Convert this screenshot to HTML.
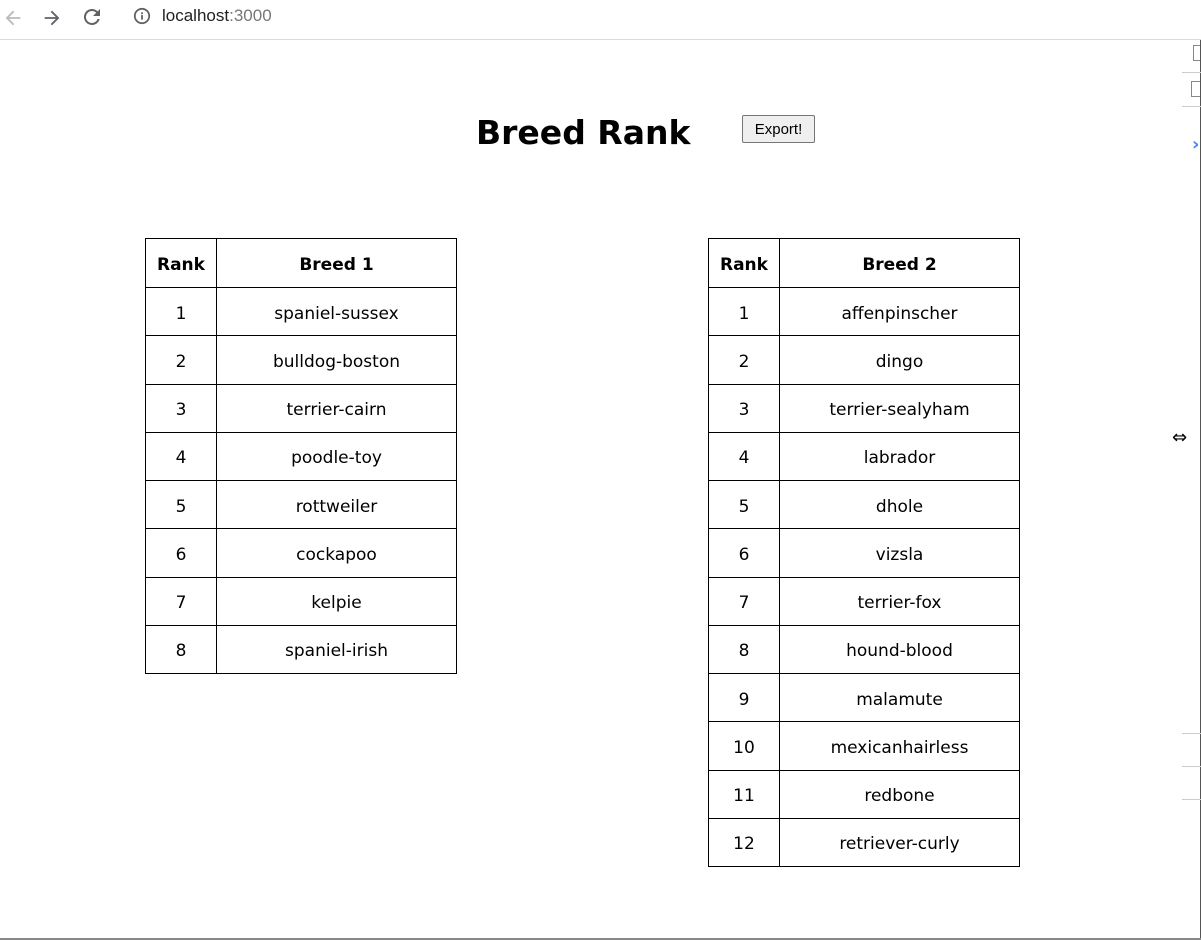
<!DOCTYPE html>
<html><head><meta charset="utf-8"><style>
body{margin:0;width:1201px;height:940px;background:#fff;font-family:"DejaVu Sans","Liberation Sans",sans-serif;position:relative;overflow:hidden}
.bar{position:absolute;left:0;top:0;width:1201px;height:39px;border-bottom:1px solid #dadce0;background:#fff}
.bar span{position:absolute;top:6px;font-size:17px;font-family:"Liberation Sans",sans-serif}
h1{position:absolute;left:476px;top:113px;margin:0;font-size:33px;font-weight:bold;letter-spacing:0px}
button{position:absolute;left:742px;top:115px;width:73px;height:28px;font-family:"Liberation Sans",sans-serif;font-size:15px;background:#efefef;border:1px solid #767676;border-radius:2px;padding:0}
table{position:absolute;border-collapse:collapse;top:238px;font-size:17px}
td,th{border:1px solid #000;height:43.25px;padding:4px 0 0 0;text-align:center;vertical-align:middle}
th{height:44px}
td:first-child,th:first-child{width:70px}
td:last-child,th:last-child{width:239px}
</style></head><body>
<div class="bar">
<svg style="position:absolute;left:2px;top:7px" width="22" height="22" viewBox="0 0 24 24"><path d="M20 11H7.8l5.6-5.6L12 4l-8 8 8 8 1.4-1.4L7.8 13H20z" fill="#bbb"/></svg>
<svg style="position:absolute;left:41px;top:7px" width="22" height="22" viewBox="0 0 24 24"><path d="M4 11h12.2l-5.6-5.6L12 4l8 8-8 8-1.4-1.4 5.6-5.6H4z" fill="#5f6368"/></svg>
<svg style="position:absolute;left:80px;top:5px" width="24" height="24" viewBox="0 0 24 24"><path d="M17.65 6.35A8 8 0 1 0 19.7 14h-2.1A6 6 0 1 1 12 6c1.66 0 3.14.69 4.22 1.78L13 11h7V4z" fill="#5f6368"/></svg>
<svg style="position:absolute;left:133px;top:7px" width="18" height="18" viewBox="0 0 20 20"><circle cx="10" cy="10" r="8" fill="none" stroke="#5f6368" stroke-width="2"/><rect x="9" y="9" width="2" height="5" fill="#5f6368"/><rect x="9" y="6" width="2" height="2" fill="#5f6368"/></svg>
<span style="left:162px;color:#202124">localhost<span style="position:static;color:#777">:3000</span></span>
</div>
<div style="position:absolute;left:1200px;top:40px;width:1px;height:900px;background:#555"></div>
<div style="position:absolute;left:0;top:938px;width:1201px;height:2px;background:#888"></div>
<div style="position:absolute;left:1193px;top:45px;width:7px;height:16px;border:1px solid #888;border-right:none;box-sizing:border-box"></div>
<div style="position:absolute;left:1191px;top:81px;width:9px;height:16px;border:1px solid #888;border-right:none;box-sizing:border-box"></div>
<div style="position:absolute;left:1182px;top:72px;width:19px;height:1px;background:#ccc"></div>
<div style="position:absolute;left:1182px;top:106px;width:19px;height:1px;background:#ccc"></div>
<div style="position:absolute;left:1182px;top:733px;width:19px;height:1px;background:#ccc"></div>
<div style="position:absolute;left:1182px;top:766px;width:19px;height:1px;background:#ccc"></div>
<div style="position:absolute;left:1182px;top:799px;width:19px;height:1px;background:#ccc"></div>
<div style="position:absolute;left:1192px;top:134px;color:#4285f4;font-size:18px;font-weight:bold">›</div>
<div style="position:absolute;left:1172px;top:427px;font-size:18px">⇔</div>
<h1>Breed Rank</h1>
<button>Export!</button>
<table style="left:145px">
<tr><th>Rank</th><th>Breed 1</th></tr>
<tr><td>1</td><td>spaniel-sussex</td></tr>
<tr><td>2</td><td>bulldog-boston</td></tr>
<tr><td>3</td><td>terrier-cairn</td></tr>
<tr><td>4</td><td>poodle-toy</td></tr>
<tr><td>5</td><td>rottweiler</td></tr>
<tr><td>6</td><td>cockapoo</td></tr>
<tr><td>7</td><td>kelpie</td></tr>
<tr><td>8</td><td>spaniel-irish</td></tr>
</table>
<table style="left:708px">
<tr><th>Rank</th><th>Breed 2</th></tr>
<tr><td>1</td><td>affenpinscher</td></tr>
<tr><td>2</td><td>dingo</td></tr>
<tr><td>3</td><td>terrier-sealyham</td></tr>
<tr><td>4</td><td>labrador</td></tr>
<tr><td>5</td><td>dhole</td></tr>
<tr><td>6</td><td>vizsla</td></tr>
<tr><td>7</td><td>terrier-fox</td></tr>
<tr><td>8</td><td>hound-blood</td></tr>
<tr><td>9</td><td>malamute</td></tr>
<tr><td>10</td><td>mexicanhairless</td></tr>
<tr><td>11</td><td>redbone</td></tr>
<tr><td>12</td><td>retriever-curly</td></tr>
</table>
</body></html>
